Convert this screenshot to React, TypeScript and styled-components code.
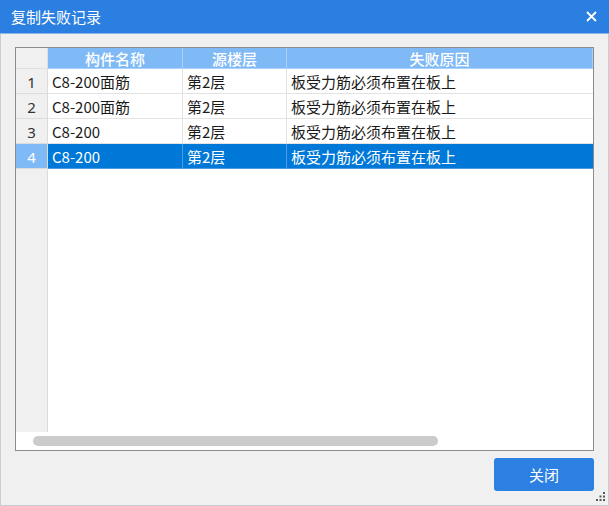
import React from "react";
import styled, { createGlobalStyle } from "styled-components";

const Global = createGlobalStyle`
  html, body { margin: 0; padding: 0; width: 609px; height: 506px; overflow: hidden; }
  body { font-family: "Noto Sans CJK SC", "Noto Sans", sans-serif; }
  #root { width: 609px; height: 506px; }
`;

const Window = styled.div`
  width: 609px;
  height: 506px;
  box-sizing: border-box;
  background: #f0f0f0;
  border: 1px solid #c6cdd6;
  border-top: none;
  display: flex;
  flex-direction: column;
  position: relative;
`;

const TitleBar = styled.div`
  height: 33px;
  margin: 0 -1px;
  background: #2b7fe1;
  border-bottom: 1px solid #8fb8ea;
  display: flex;
  align-items: center;
  justify-content: space-between;
  padding: 0 12px 0 11px;
  color: #ffffff;
  font-size: 15px;
  flex-shrink: 0;
`;

const CloseBtn = styled.div`
  width: 12px;
  height: 12px;
  display: flex;
  align-items: center;
  justify-content: center;
`;

const Content = styled.div`
  flex: 1;
  display: flex;
  flex-direction: column;
  padding: 13px 14px 0 14px;
`;

const TableFrame = styled.div`
  height: 404px;
  box-sizing: border-box;
  border: 1px solid #8c8c8c;
  background: #ffffff;
  display: flex;
  flex-direction: column;
`;

const Grid = styled.div`
  flex: 1;
  display: grid;
  grid-template-columns: 32px 135px 104px 1fr;
  grid-template-rows: 21px repeat(4, 25px) 1fr;
`;

const HeadCell = styled.div<{ $corner?: boolean }>`
  background: ${(p) => (p.$corner ? "#f0f0f0" : "#7fbaf6")};
  color: #ffffff;
  font-size: 15px;
  font-weight: 500;
  display: flex;
  align-items: center;
  justify-content: center;
  border-right: 1px solid ${(p) => (p.$corner ? "#e0e0e0" : "#a9d0f8")};
  border-bottom: 1px solid ${(p) => (p.$corner ? "#e0e0e0" : "#a9d0f8")};
  &:last-child { border-right: none; }
`;

const NumCell = styled.div<{ $sel?: boolean }>`
  background: ${(p) => (p.$sel ? "#7fbaf6" : "#f0f0f0")};
  color: ${(p) => (p.$sel ? "#ffffff" : "#333333")};
  font-size: 15px;
  font-family: "Noto Sans", sans-serif;
  display: flex;
  align-items: center;
  justify-content: center;
  border-right: 1px solid #dcdcdc;
  border-bottom: 1px solid #dcdcdc;
  padding-top: 1px;
`;

const Cell = styled.div<{ $sel?: boolean; $last?: boolean }>`
  background: ${(p) => (p.$sel ? "#0078d7" : "#ffffff")};
  color: ${(p) => (p.$sel ? "#ffffff" : "#1a1a1a")};
  font-size: 15px;
  display: flex;
  align-items: center;
  padding-left: 4px;
  padding-top: 1px;
  white-space: nowrap;
  border-right: ${(p) => (p.$last ? "none" : `1px solid ${p.$sel ? "#4d9be0" : "#e3e3e3"}`)};
  border-bottom: 1px solid ${(p) => (p.$sel ? "#4d9be0" : "#e3e3e3")};
`;

const NumFill = styled.div`
  background: #f0f0f0;
  border-right: 1px solid #dcdcdc;
`;

const ScrollArea = styled.div`
  height: 18px;
  flex-shrink: 0;
  display: flex;
  align-items: center;
  padding-left: 17px;
`;

const Thumb = styled.div`
  width: 405px;
  height: 10px;
  border-radius: 5px;
  background: #cbcbcb;
`;

const Footer = styled.div`
  display: flex;
  justify-content: flex-end;
  padding-top: 7px;
`;

const Button = styled.button`
  width: 100px;
  height: 33px;
  border: none;
  border-radius: 3px;
  background: #2b80e2;
  color: #ffffff;
  font-family: "Noto Sans CJK SC", sans-serif;
  font-size: 15px;
  padding: 0;
`;

const Grip = styled.div`
  position: absolute;
  right: 3px;
  bottom: 4px;
  width: 9px;
  height: 9px;
  display: flex;
`;

const rows = [
  ["C8-200面筋", "第2层", "板受力筋必须布置在板上"],
  ["C8-200面筋", "第2层", "板受力筋必须布置在板上"],
  ["C8-200", "第2层", "板受力筋必须布置在板上"],
  ["C8-200", "第2层", "板受力筋必须布置在板上"],
];

export default function App() {
  const selected = 3;
  return (
    <>
      <Global />
      <Window>
        <TitleBar>
          <span>复制失败记录</span>
          <CloseBtn>
            <svg width="11" height="11" viewBox="0 0 11 11">
              <path d="M1 1 L10 10 M10 1 L1 10" stroke="#ffffff" strokeWidth="1.8" />
            </svg>
          </CloseBtn>
        </TitleBar>
        <Content>
          <TableFrame>
            <Grid>
              <HeadCell $corner />
              <HeadCell>构件名称</HeadCell>
              <HeadCell>源楼层</HeadCell>
              <HeadCell>失败原因</HeadCell>
              {rows.map((r, i) => (
                <React.Fragment key={i}>
                  <NumCell $sel={i === selected}>{i + 1}</NumCell>
                  <Cell $sel={i === selected}>{r[0]}</Cell>
                  <Cell $sel={i === selected}>{r[1]}</Cell>
                  <Cell $sel={i === selected} $last>{r[2]}</Cell>
                </React.Fragment>
              ))}
              <NumFill />
            </Grid>
            <ScrollArea>
              <Thumb />
            </ScrollArea>
          </TableFrame>
          <Footer>
            <Button>关闭</Button>
          </Footer>
        </Content>
        <Grip>
          <svg width="9" height="9" viewBox="0 0 9 9">
            <rect x="7" y="0" width="2" height="2" fill="#5a5a5a" />
            <rect x="3.5" y="3.5" width="2" height="2" fill="#5a5a5a" />
            <rect x="7" y="3.5" width="2" height="2" fill="#5a5a5a" />
            <rect x="0" y="7" width="2" height="2" fill="#5a5a5a" />
            <rect x="3.5" y="7" width="2" height="2" fill="#5a5a5a" />
            <rect x="7" y="7" width="2" height="2" fill="#5a5a5a" />
          </svg>
        </Grip>
      </Window>
    </>
  );
}
